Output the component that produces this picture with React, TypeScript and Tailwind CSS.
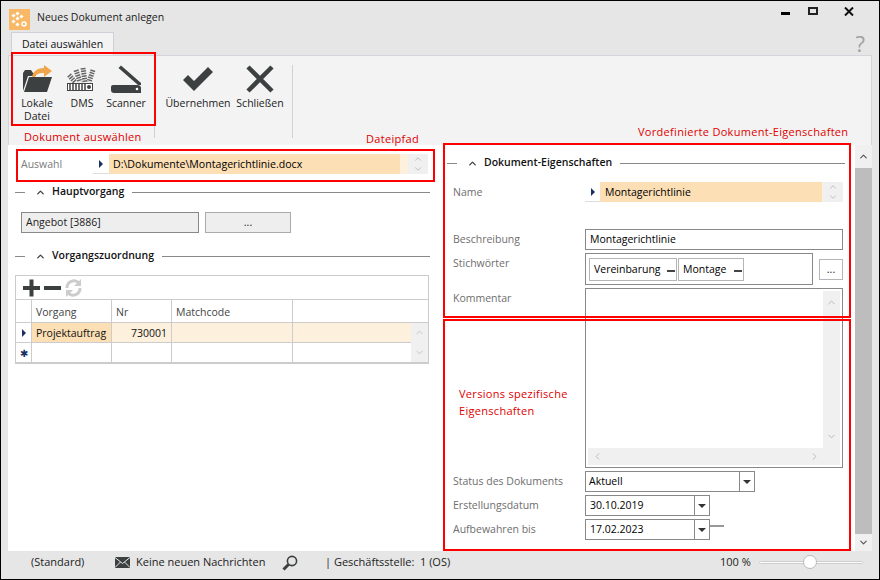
import { ChevronDown, ChevronUp, ChevronLeft, ChevronRight } from "lucide-react";
import type { ReactNode } from "react";

const font = "font-['Open_Sans','Noto_Sans',sans-serif]";

function SectionHeader({ title }: { title: string }) {
  return (
    <div className="flex items-center h-[16px]">
      <div className="h-px w-[10px] bg-[#888]" />
      <ChevronUp className="ml-[10px] h-[11px] w-[11px] text-[#444]" strokeWidth={3} />
      <span className="ml-[6px] text-[10.5px] font-semibold text-[#111]">{title}</span>
      <div className="ml-[8px] h-px flex-1 bg-[#888]" />
    </div>
  );
}

function RowArrow() {
  return <div className="h-0 w-0 border-y-[4px] border-l-[4px] border-y-transparent border-l-[#1c2f63]" />;
}

function Spin() {
  return (
    <div className="flex flex-col items-center justify-center bg-[#f0f0f0] w-[20px] h-full text-[#b5b5b5]">
      <ChevronUp className="h-[10px] w-[10px]" strokeWidth={2} />
      <ChevronDown className="h-[10px] w-[10px]" strokeWidth={2} />
    </div>
  );
}

function FieldRow({ label, top, children }: { label: string; top?: string; children: ReactNode }) {
  return (
    <div className="flex">
      <div className={`w-[135px] pl-[3px] text-[10.5px] text-[#6e6e6e] ${top ?? "pt-[3px]"}`}>{label}</div>
      {children}
    </div>
  );
}

function DropInput({ value, width, pad }: { value: string; width: string; pad: string }) {
  return (
    <div className={`flex h-[21px] border border-[#888] bg-white ${width}`}>
      <div className={`flex-1 text-[10.5px] leading-[19px] text-black ${pad}`}>{value}</div>
      <div className="flex w-[15px] items-center justify-center border-l border-[#888]">
        <div className="h-0 w-0 border-x-[4px] border-t-[4px] border-x-transparent border-t-[#333]" />
      </div>
    </div>
  );
}

function Chip({ text, width }: { text: string; width: string }) {
  return (
    <div className={`flex items-center h-[23px] border border-[#b5b5b5] pl-[4px] text-[10.5px] text-black ${width}`}>
      <span className="flex-1">{text}</span>
      <span className="mr-[1px] mt-[3px] h-[2px] w-[8px] bg-[#444]" />
    </div>
  );
}

function FolderIcon() {
  return (
    <svg width="32" height="28" viewBox="0 0 32 28">
      <path d="M2 26 L2 8 L4 5 L10 5 L12 8 L15 8 L15 11 L7 11 Z" fill="#3d4040" />
      <path d="M3 27 L8 12 L31 12 L26 27 Z" fill="#3d4040" />
      <path d="M11 12 C12 6 17 3 23 3 L23 0 L31 6 L23 12 L23 8 C18 8 15 9 14 12 Z" fill="#f0a54a" />
    </svg>
  );
}

function DmsIcon() {
  return (
    <svg width="32" height="28" viewBox="0 0 32 28">
      <g fill="none" stroke="#666" strokeWidth="5" strokeDasharray="1.5 1">
        <path d="M3 10 L9 17" />
        <path d="M10 5 L14 17" />
        <path d="M17 3 L19 17" />
        <path d="M27 5 L23 17" />
      </g>
      <rect x="1.5" y="18.5" width="25" height="7" fill="#fff" stroke="#444" />
      <path d="M4 19v6M7 19v6M10 19v6M13 19v6M16 19v6M19 19v6" stroke="#444" strokeWidth="1.5" />
      <circle cx="23" cy="22" r="2" fill="#444" />
    </svg>
  );
}

function ScannerIcon() {
  return (
    <svg width="32" height="28" viewBox="0 0 32 28">
      <path d="M8.5 3 L11 0.5 L31 18 L31 20 L28 20 Z" fill="#3d4040" />
      <path d="M1 22 Q1 20 3 20 L27 20 Q31 20 31 23 L31 28 L4 28 Q1 28 1 25 Z" fill="#3d4040" />
      <circle cx="27" cy="24" r="1.3" fill="#fff" />
    </svg>
  );
}

function RibbonButton({ icon, label, width }: { icon: ReactNode; label: ReactNode; width: string }) {
  return (
    <div className={`flex flex-col items-center ${width}`}>
      <div className="flex h-[28px] items-end justify-center">{icon}</div>
      <div className="mt-[4px] text-center text-[10.5px] leading-[13px] text-[#222]">{label}</div>
    </div>
  );
}

function RedBox({ className }: { className: string }) {
  return <div className={`pointer-events-none absolute border-2 border-[#f00] ${className}`} />;
}

function Note({ className, children }: { className: string; children: ReactNode }) {
  return <div className={`absolute text-[11px] leading-[17px] tracking-[0.3px] text-[#e00000] ${className}`}>{children}</div>;
}

export default function App() {
  return (
    <div className={`relative flex h-[580px] w-[880px] flex-col border border-black bg-[#e6e6e6] ${font}`}>
      {/* title */}
      <div className="flex h-[31px] shrink-0 items-start pl-[8px] pt-[8px]">
        <div className="relative h-[21px] w-[21px] bg-[#f8b866]">
          <svg width="21" height="21" viewBox="0 0 21 21">
            <g fill="#fff">
              <rect x="3" y="5" width="3" height="3" transform="rotate(45 4.5 6.5)" />
              <rect x="7" y="3" width="3" height="3" transform="rotate(45 8.5 4.5)" />
              <rect x="7" y="8" width="3" height="3" transform="rotate(45 8.5 9.5)" />
              <rect x="11" y="6" width="3" height="3" transform="rotate(45 12.5 7.5)" />
              <rect x="3" y="11" width="3" height="3" transform="rotate(45 4.5 12.5)" />
              <rect x="7" y="14" width="3" height="3" transform="rotate(45 8.5 15.5)" />
            </g>
            <circle cx="15" cy="15" r="2" fill="none" stroke="#fff" strokeWidth="1.5" />
          </svg>
        </div>
        <div className="ml-[7px] text-[10.5px] leading-[16px] text-[#1a1a1a]">Neues Dokument anlegen</div>
        <div className="ml-auto -mt-[2px] flex items-start">
          <div className="mt-[5px] h-[3px] w-[9px] bg-black" />
          <div className="ml-[18px] h-[8px] w-[10px] border-2 border-[#222]" />
          <svg className="ml-[26px] mr-[25px]" width="10" height="9" viewBox="0 0 10 9">
            <path d="M1 0.5 L9 8.5 M9 0.5 L1 8.5" stroke="#111" strokeWidth="2" />
          </svg>
        </div>
      </div>

      {/* tab */}
      <div className="flex h-[23px] shrink-0 items-end pl-[10px] pr-[14px]">
        <div className="flex h-[23px] w-[103px] items-center justify-center border border-b-0 border-[#d0d0d8] bg-[#f3f3f3] pt-[2px] text-[10.5px] text-[#111]">
          Datei auswählen
        </div>
        <div className="ml-auto text-[22px] leading-[24px] text-[#a0a0a0]">?</div>
      </div>

      {/* ribbon */}
      <div className="ml-[7px] mr-[7px] flex h-[90px] shrink-0 border-x border-t border-[#d4d4dc] bg-[#f3f3f3]">
        <div className="my-[9px] mb-[7px] flex w-[146px] items-start border-r border-[#d0d0d8] pl-[5px]">
          <RibbonButton icon={<FolderIcon />} label={<>Lokale<br />Datei</>} width="w-[46px]" />
          <RibbonButton icon={<DmsIcon />} label="DMS" width="w-[44px]" />
          <RibbonButton icon={<ScannerIcon />} label="Scanner" width="w-[44px]" />
        </div>
        <div className="my-[9px] mb-[7px] flex w-[138px] items-start border-r border-[#d0d0d8] pl-[10px]">
          <RibbonButton
            icon={
              <svg width="30" height="28" viewBox="0 0 30 28">
                <path d="M0 15 L5 10 L11 16 L25 2 L30 7 L11 26 Z" fill="#3d4040" />
              </svg>
            }
            label="Übernehmen"
            width="w-[66px]"
          />
          <RibbonButton
            icon={
              <svg width="28" height="28" viewBox="0 0 28 28">
                <path d="M2 2 L26 26 M26 2 L2 26" stroke="#3d4040" strokeWidth="4.5" />
              </svg>
            }
            label="Schließen"
            width="w-[58px]"
          />
        </div>
      </div>

      {/* content */}
      <div className="ml-[7px] mr-[7px] flex min-h-0 flex-1">
        <div className="flex w-[432px] flex-col bg-white pl-[7px] pr-[10px] pt-[9px]">
          <div className="flex h-[20px] items-center pl-[6px]">
            <div className="w-[72px] pt-[1px] text-[10.5px] text-[#7a7a7a]">Auswahl</div>
            <div className="flex h-full w-[16px] items-center justify-center border-b border-[#ddd]"><RowArrow /></div>
            <div className="h-full w-[291px] bg-[#fcdfb5] pl-[4px] text-[10.6px] leading-[21px] text-black">
              D:\Dokumente\Montagerichtlinie.docx
            </div>
            <div className="flex h-full w-[28px] justify-end bg-[#fdf0dd]"><Spin /></div>
          </div>

          <div className="mt-[10px]"><SectionHeader title="Hauptvorgang" /></div>

          <div className="ml-[6px] mt-[12px] flex h-[21px]">
            <div className="w-[178px] border border-[#888] bg-[#eee] pl-[4px] text-[10.5px] leading-[19px] text-[#222]">Angebot [3886]</div>
            <div className="ml-[6px] w-[86px] border border-[#aaa] bg-[#eee] text-center text-[10.5px] leading-[19px] text-[#222]">...</div>
          </div>

          <div className="mt-[15px]"><SectionHeader title="Vorgangszuordnung" /></div>

          <div className="mt-[11px] w-[414px] border border-[#ccc] border-b-2 text-[10.5px] text-[#111]">
            <div className="flex h-[24px] items-center border-b border-[#ccc] pl-[6px]">
              <svg width="62" height="20" viewBox="0 0 62 20">
                <path d="M1 10 H18 M9.5 1.5 V18.5" stroke="#3d4040" strokeWidth="4" />
                <path d="M22 10 H39" stroke="#3d4040" strokeWidth="4" />
                <path d="M45 10 A7 7 0 0 1 57 5 M58 10 A7 7 0 0 1 46 15" fill="none" stroke="#ccc" strokeWidth="3" />
                <path d="M59 1 V8 H52 Z M44 19 V12 H51 Z" fill="#ccc" />
              </svg>
            </div>
            <div className="flex h-[23px] border-b border-[#ccc] text-[#444]">
              <div className="w-[16px] border-r border-[#ccc]" />
              <div className="w-[80px] border-r border-[#ccc] pl-[4px] leading-[24px]">Vorgang</div>
              <div className="w-[60px] border-r border-[#ccc] pl-[4px] leading-[24px]">Nr</div>
              <div className="w-[121px] border-r border-[#ccc] pl-[4px] leading-[24px]">Matchcode</div>
              <div className="flex-1" />
            </div>
            <div className="flex">
              <div className="flex-1">
                <div className="flex h-[20px] border-b border-[#ccc]">
                  <div className="flex w-[16px] items-center justify-center border-r border-[#ccc]"><RowArrow /></div>
                  <div className="w-[80px] border-r border-[#ccc] bg-[#fcdfb5] pl-[4px] leading-[21px]">Projektauftrag</div>
                  <div className="w-[60px] border-r border-[#ccc] bg-[#fdf0dd] pr-[4px] text-right leading-[21px]">730001</div>
                  <div className="w-[121px] border-r border-[#ccc] bg-[#fdf0dd]" />
                  <div className="flex-1 bg-[#fdf0dd]" />
                </div>
                <div className="flex h-[19px]">
                  <div className="flex w-[16px] items-center justify-center border-r border-[#ccc] text-[10px] leading-none text-[#1c2f63]">✱</div>
                  <div className="w-[80px] border-r border-[#ccc]" />
                  <div className="w-[60px] border-r border-[#ccc]" />
                  <div className="w-[121px] border-r border-[#ccc]" />
                  <div className="flex-1" />
                </div>
              </div>
              <div className="flex w-[17px] flex-col items-center justify-between bg-[#f0f0f0] py-[4px] text-[#b5b5b5]">
                <ChevronUp className="h-[11px] w-[11px]" strokeWidth={1.5} />
                <ChevronDown className="h-[11px] w-[11px]" strokeWidth={1.5} />
              </div>
            </div>
          </div>
        </div>

        <div className="flex min-w-0 flex-1 flex-col bg-white pl-[7px] pr-[10px] pt-[10px]">
          <SectionHeader title="Dokument-Eigenschaften" />
          <div className="mt-[11px] pl-[3px]">
            <div className="flex h-[20px]">
              <div className="w-[135px] pl-[3px] text-[10.5px] leading-[20px] text-[#6e6e6e]">Name</div>
              <div className="flex w-[15px] items-center justify-center border-b border-[#ddd]"><RowArrow /></div>
              <div className="w-[222px] bg-[#fcdfb5] pl-[5px] text-[10.5px] leading-[20px] text-black">Montagerichtlinie</div>
              <div className="flex w-[21px] justify-end bg-[#fdf0dd]"><Spin /></div>
            </div>
            <div className="mt-[27px]">
              <FieldRow label="Beschreibung">
                <div className="h-[21px] w-[258px] border border-[#888] pl-[4px] text-[10.5px] leading-[19px] text-black">Montagerichtlinie</div>
              </FieldRow>
            </div>
            <div className="mt-[3px]">
              <FieldRow label="Stichwörter">
                <div className="flex h-[32px] w-[228px] gap-[1px] border border-[#888] pl-[3px] pt-[4px]">
                  <Chip text="Vereinbarung" width="w-[88px]" />
                  <Chip text="Montage" width="w-[66px]" />
                </div>
                <div className="ml-[6px] mt-[6px] h-[21px] w-[24px] border border-[#b5b5b5] text-center text-[10.5px] leading-[19px] text-[#222]">...</div>
              </FieldRow>
            </div>
            <div className="mt-[3px]">
              <FieldRow label="Kommentar">
                <div className="flex h-[180px] w-[258px] flex-col border border-[#888] p-[2px]">
                  <div className="flex min-h-0 flex-1 justify-end">
                    <div className="flex w-[17px] flex-col items-center justify-between bg-[#f0f0f0] py-[6px] text-[#b5b5b5]">
                      <ChevronUp className="h-[11px] w-[11px]" strokeWidth={2} />
                      <ChevronDown className="h-[11px] w-[11px]" strokeWidth={2} />
                    </div>
                  </div>
                  <div className="flex h-[17px] items-center justify-between bg-[#f0f0f0] px-[4px] text-[#b5b5b5]">
                    <ChevronLeft className="h-[11px] w-[11px]" strokeWidth={2} />
                    <ChevronRight className="mr-[16px] h-[11px] w-[11px]" strokeWidth={2} />
                  </div>
                </div>
              </FieldRow>
            </div>
            <div className="mt-[3px]">
              <FieldRow label="Status des Dokuments">
                <DropInput value="Aktuell" width="w-[170px]" pad="pl-[3px]" />
              </FieldRow>
            </div>
            <div className="mt-[3px]">
              <FieldRow label="Erstellungsdatum">
                <DropInput value="30.10.2019" width="w-[125px]" pad="pl-[4px]" />
              </FieldRow>
            </div>
            <div className="mt-[3px]">
              <FieldRow label="Aufbewahren bis">
                <DropInput value="17.02.2023" width="w-[125px]" pad="pl-[4px]" />
                <div className="mt-[6px] h-[2px] w-[14px] bg-[#999]" />
              </FieldRow>
            </div>
          </div>
        </div>

        {/* page scrollbar */}
        <div className="flex w-[17px] flex-col bg-[#f0f0f0]">
          <div className="flex h-[23px] items-center justify-center text-[#555]"><ChevronUp className="h-[11px] w-[11px]" strokeWidth={2.5} /></div>
          <div className="flex-1 bg-[#bdbdbd]" />
          <div className="flex h-[17px] items-center justify-center text-[#555]"><ChevronDown className="h-[11px] w-[11px]" strokeWidth={2.5} /></div>
        </div>
      </div>

      {/* status bar */}
      <div className="flex h-[28px] shrink-0 items-center pb-[5px] pl-[30px] text-[11px] text-[#222]">
        <span className="w-[84px]">(Standard)</span>
        <svg width="15" height="11" viewBox="0 0 15 11">
          <rect width="15" height="11" fill="#3d4040" />
          <path d="M0 0.5 L7.5 6.5 L15 0.5 M0 10.5 L5.5 5 M15 10.5 L9.5 5" fill="none" stroke="#e6e6e6" strokeWidth="1" />
        </svg>
        <span className="ml-[6px] w-[146px]">Keine neuen Nachrichten</span>
        <svg width="16" height="16" viewBox="0 0 16 16">
          <circle cx="10" cy="6" r="4.6" fill="none" stroke="#3d4040" strokeWidth="1.6" />
          <path d="M6.5 9.5 L1.5 14.5" stroke="#3d4040" strokeWidth="3" />
        </svg>
        <span className="ml-[27px]">| Geschäftsstelle:&nbsp; 1 (OS)</span>
        <div className="ml-auto mr-[16px] flex items-center">
          <span className="w-[39px]">100 %</span>
          <div className="relative h-[3px] w-[104px] rounded-full border border-[#ccc] bg-white">
            <div className="absolute left-[43px] top-[-7px] h-[14px] w-[14px] rounded-full border border-[#bbb] bg-white" />
          </div>
        </div>
      </div>

      {/* annotations drawn over the screenshot */}
      <RedBox className="left-[10px] top-[51px] h-[74px] w-[145px]" />
      <RedBox className="left-[15px] top-[148px] h-[33px] w-[419px]" />
      <RedBox className="left-[442px] top-[142px] h-[175px] w-[408px]" />
      <RedBox className="left-[442px] top-[318px] h-[232px] w-[408px]" />
      <Note className="left-[23px] top-[127px]">Dokument auswählen</Note>
      <Note className="left-[365px] top-[129px]">Dateipfad</Note>
      <Note className="left-[637px] top-[122px]">Vordefinierte Dokument-Eigenschaften</Note>
      <Note className="left-[458px] top-[384px]">Versions spezifische<br />Eigenschaften</Note>
    </div>
  );
}
